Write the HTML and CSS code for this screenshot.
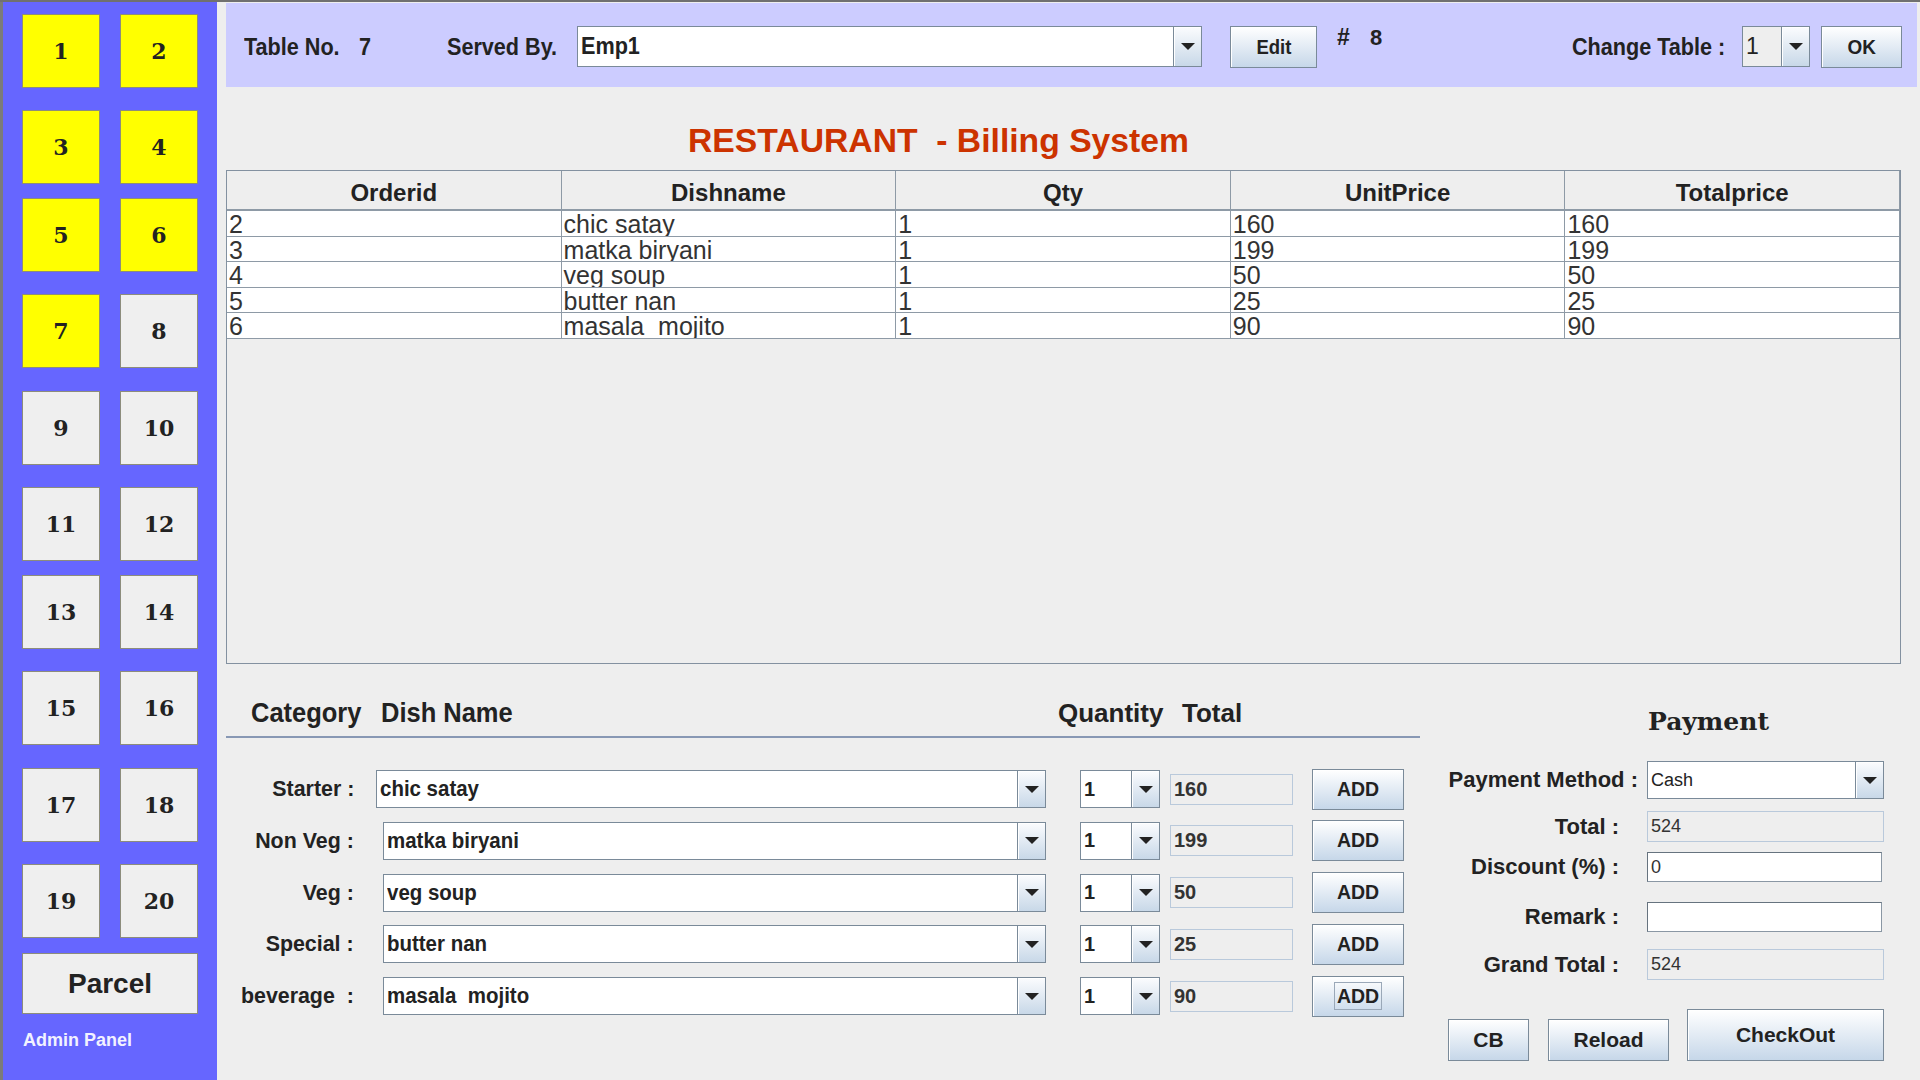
FILE: index.html
```html
<!DOCTYPE html>
<html lang="en">
<head>
<meta charset="utf-8">
<title>RESTAURANT - Billing System</title>
<link rel="stylesheet" href="styles.css">
</head>
<body>
<div class="app">
  <aside class="sidebar">
    <div class="trow"><button class="tbtn busy">1</button><button class="tbtn busy">2</button></div>
    <div class="trow g14"><button class="tbtn busy">3</button><button class="tbtn busy">4</button></div>
    <div class="trow"><button class="tbtn busy">5</button><button class="tbtn busy">6</button></div>
    <div class="trow g23"><button class="tbtn busy">7</button><button class="tbtn">8</button></div>
    <div class="trow"><button class="tbtn">9</button><button class="tbtn">10</button></div>
    <div class="trow g14"><button class="tbtn">11</button><button class="tbtn">12</button></div>
    <div class="trow"><button class="tbtn">13</button><button class="tbtn">14</button></div>
    <div class="trow g23"><button class="tbtn">15</button><button class="tbtn">16</button></div>
    <div class="trow"><button class="tbtn">17</button><button class="tbtn">18</button></div>
    <div class="trow g15"><button class="tbtn">19</button><button class="tbtn">20</button></div>
    <button class="parcel">Parcel</button>
    <div class="admin">Admin Panel</div>
  </aside>

  <main class="main">
    <header class="topbar">
      <span class="tlabel tno"><span class="sq">Table No.</span></span>
      <span class="tlabel tval"><span class="sq">7</span></span>
      <span class="tlabel served"><span class="sq">Served By.</span></span>
      <div class="combo served-combo"><span class="cval"><span class="sq">Emp1</span></span><span class="carrow"></span></div>
      <button class="btn edit"><span class="sq mid">Edit</span></button>
      <span class="ordno"><span class="hash">#</span>8</span>
      <div class="change">
        <span class="tlabel"><span class="sq right">Change Table :</span></span>
        <div class="combo table-combo"><span class="cval grayval">1</span><span class="carrow"></span></div>
        <button class="btn ok"><span class="sq mid">OK</span></button>
      </div>
    </header>

    <h1 class="title">RESTAURANT  - Billing System</h1>

    <div class="table-pane">
      <table class="orders">
        <thead>
          <tr><th>Orderid</th><th>Dishname</th><th>Qty</th><th>UnitPrice</th><th>Totalprice</th></tr>
        </thead>
        <tbody>
          <tr><td>2</td><td>chic satay</td><td>1</td><td>160</td><td>160</td></tr>
          <tr><td>3</td><td>matka biryani</td><td>1</td><td>199</td><td>199</td></tr>
          <tr><td>4</td><td>veg soup</td><td>1</td><td>50</td><td>50</td></tr>
          <tr><td>5</td><td>butter nan</td><td>1</td><td>25</td><td>25</td></tr>
          <tr><td>6</td><td>masala  mojito</td><td>1</td><td>90</td><td>90</td></tr>
        </tbody>
      </table>
    </div>

    <section class="lower">
      <div class="order">
        <div class="heads">
          <span class="h-cat"><span class="sq">Category</span></span>
          <span class="h-dish"><span class="sq">Dish Name</span></span>
          <span class="h-qty">Quantity</span>
          <span class="h-total">Total</span>
        </div>
        <div class="rule"></div>
        <div class="rows">
          <div class="drow">
            <span class="dlabel"><span class="sq right">Starter :</span></span>
            <div class="combo dish first"><span class="cval dishval"><span class="sq">chic satay</span></span><span class="carrow"></span></div>
            <div class="combo qty"><span class="cval qtyval">1</span><span class="carrow"></span></div>
            <div class="tfield">160</div>
            <button class="btn add">ADD</button>
          </div>
          <div class="drow">
            <span class="dlabel"><span class="sq right">Non Veg :</span></span>
            <div class="combo dish"><span class="cval dishval"><span class="sq">matka biryani</span></span><span class="carrow"></span></div>
            <div class="combo qty"><span class="cval qtyval">1</span><span class="carrow"></span></div>
            <div class="tfield">199</div>
            <button class="btn add">ADD</button>
          </div>
          <div class="drow">
            <span class="dlabel"><span class="sq right">Veg :</span></span>
            <div class="combo dish"><span class="cval dishval"><span class="sq">veg soup</span></span><span class="carrow"></span></div>
            <div class="combo qty"><span class="cval qtyval">1</span><span class="carrow"></span></div>
            <div class="tfield">50</div>
            <button class="btn add">ADD</button>
          </div>
          <div class="drow">
            <span class="dlabel"><span class="sq right">Special :</span></span>
            <div class="combo dish"><span class="cval dishval"><span class="sq">butter nan</span></span><span class="carrow"></span></div>
            <div class="combo qty"><span class="cval qtyval">1</span><span class="carrow"></span></div>
            <div class="tfield">25</div>
            <button class="btn add">ADD</button>
          </div>
          <div class="drow">
            <span class="dlabel"><span class="sq right">beverage&nbsp; :</span></span>
            <div class="combo dish"><span class="cval dishval"><span class="sq">masala&nbsp; mojito</span></span><span class="carrow"></span></div>
            <div class="combo qty"><span class="cval qtyval">1</span><span class="carrow"></span></div>
            <div class="tfield">90</div>
            <button class="btn add"><span class="focus">ADD</span></button>
          </div>
        </div>
      </div>

      <div class="payment">
        <div class="ptitle">Payment</div>
        <div class="prow method">
          <span class="plabel wide">Payment Method :</span>
          <div class="combo pay-combo"><span class="cval payval">Cash</span><span class="carrow"></span></div>
        </div>
        <div class="prow ptotal">
          <span class="plabel">Total :</span>
          <div class="pfield disabled">524</div>
        </div>
        <div class="prow pdisc">
          <span class="plabel">Discount (%) :</span>
          <div class="pfield input">0</div>
        </div>
        <div class="prow premark">
          <span class="plabel">Remark :</span>
          <div class="pfield input"></div>
        </div>
        <div class="prow pgrand">
          <span class="plabel">Grand Total :</span>
          <div class="pfield disabled">524</div>
        </div>
        <div class="pbuttons">
          <button class="btn cb">CB</button>
          <button class="btn reload">Reload</button>
          <button class="btn checkout">CheckOut</button>
        </div>
      </div>
    </section>
  </main>
</div>
</body>
</html>
```

FILE: styles.css
```css
* { box-sizing: border-box; }

html, body {
  margin: 0;
  padding: 0;
  width: 1920px;
  height: 1080px;
  overflow: hidden;
  background: #eeeeee;
}

.app {
  display: flex;
  width: 1920px;
  height: 1080px;
  border-top: 2px solid #707070;
  background: #eeeeee;
  font-family: "Liberation Sans", Arial, sans-serif;
  color: #222;
}

/* condensed text: the original UI uses a narrow face */
.sq {
  display: inline-block;
  white-space: pre;
  transform: scaleX(var(--sx, 0.9));
  transform-origin: left center;
}
.sq.right { transform-origin: right center; }
.sq.mid { transform-origin: center center; }

/* ---------- sidebar ---------- */
.sidebar {
  width: 217px;
  flex: none;
  background: #6666ff;
  border-left: 3px solid #7b7b7b;
  padding: 12px 0 0 19px;
  display: flex;
  flex-direction: column;
}

.trow {
  display: flex;
  gap: 20px;
  margin-bottom: 22px;
}
.trow.g14 { margin-bottom: 14px; }
.trow.g23 { margin-bottom: 23px; }
.trow.g15 { margin-bottom: 15px; }

.tbtn {
  width: 78px;
  height: 74px;
  margin: 0;
  padding: 0;
  border: 1px solid #8c8c7c;
  background: #efefef;
  font-family: "DejaVu Serif", "Liberation Serif", serif;
  font-weight: bold;
  font-size: 22px;
  color: #222;
}
.tbtn.busy { background: #ffff00; }

.parcel {
  width: 176px;
  height: 61px;
  margin: 0;
  padding: 0;
  border: 1px solid #8c8c7c;
  background: #efefef;
  font-family: "Liberation Sans", Arial, sans-serif;
  font-weight: bold;
  font-size: 28px;
  color: #222;
}

.admin {
  margin-top: 16px;
  margin-left: 1px;
  font-weight: bold;
  font-size: 18px;
  line-height: 20px;
  color: #f2f2ff;
}

/* ---------- main ---------- */
.main {
  flex: 1;
  padding-left: 9px;
  display: flex;
  flex-direction: column;
}

.topbar {
  margin-top: 1px;
  margin-right: 3px;
  height: 84px;
  padding: 3px 0 0 18px;
  background: #ccccff;
  display: flex;
  align-items: center;
}

.tlabel {
  font-weight: bold;
  font-size: 24px;
  color: #222;
  white-space: nowrap;
  --sx: 0.9;
}
.tno { width: 115px; }
.tval { width: 88px; }
.served { width: 130px; }

.combo {
  display: flex;
  border: 1px solid #7a8a99;
  background: #ffffff;
  flex: none;
}
.cval {
  flex: 1;
  display: flex;
  align-items: center;
  padding-left: 3px;
  overflow: hidden;
  white-space: pre;
  color: #222;
}
.carrow {
  width: 28px;
  flex: none;
  border-left: 1px solid #7a8a99;
  background: linear-gradient(#fbfcfe, #c8d8e8);
  box-shadow: inset 1px 1px 0 #ffffff;
  display: flex;
  align-items: center;
  justify-content: center;
}
.carrow::after {
  content: "";
  width: 0;
  height: 0;
  border-left: 7px solid transparent;
  border-right: 7px solid transparent;
  border-top: 7px solid #222;
}

.served-combo {
  width: 625px;
  height: 41px;
}
.served-combo .cval {
  font-weight: bold;
  font-size: 23px;
  --sx: 0.94;
}

.btn {
  margin: 0;
  padding: 0;
  border: 1px solid #7a8a99;
  background: linear-gradient(#ffffff, #c6d7e9);
  box-shadow: inset 1px 1px 0 #ffffff;
  font-family: "Liberation Sans", Arial, sans-serif;
  font-weight: bold;
  color: #222;
}

.edit {
  margin-left: 28px;
  width: 87px;
  height: 42px;
  font-size: 21px;
  --sx: 0.88;
}

.ordno {
  align-self: flex-start;
  margin-top: 19px;
  margin-left: 20px;
  font-weight: bold;
  font-size: 22px;
  line-height: 24px;
  color: #222;
  white-space: nowrap;
}
.hash {
  display: inline-block;
  width: 33px;
  font-size: 23px;
}

.change {
  margin-left: auto;
  margin-right: 15px;
  display: flex;
  align-items: center;
}
.table-combo {
  margin-left: 17px;
  width: 68px;
  height: 41px;
}
.grayval {
  background: #eeeeee;
  font-size: 23px;
}
.ok {
  margin-left: 11px;
  width: 81px;
  height: 42px;
  font-size: 21px;
  --sx: 0.9;
}

.title {
  margin: 33px 0 0 462px;
  height: 40px;
  font-family: "Liberation Sans", Arial, sans-serif;
  font-weight: bold;
  font-size: 33.7px;
  line-height: 40px;
  color: #cc3300;
  white-space: pre;
}

/* ---------- table ---------- */
.table-pane {
  margin-top: 10px;
  width: 1675px;
  height: 494px;
  border: 1px solid #8391a0;
  background: #eeeeee;
  flex: none;
}
.orders {
  width: 100%;
  border-collapse: separate;
  border-spacing: 0;
  table-layout: fixed;
}
.orders th {
  padding: 6px 0 0 0;
  line-height: 32px;
  background: #eeeeee;
  border-right: 1px solid #8e9aa6;
  border-bottom: 2px solid #8e9aa6;
  font-weight: bold;
  font-size: 24px;
  color: #222;
  text-align: center;
}
.orders td {
  padding: 3px 0 0 2px;
  line-height: 21.6px;
  height: 25.6px;
  background: #ffffff;
  border-right: 1px solid #8e9aa6;
  border-bottom: 1px solid #8e9aa6;
  font-size: 25px;
  color: #333;
  white-space: pre;
  overflow: hidden;
}

/* ---------- lower ---------- */
.lower {
  flex: 1;
  display: flex;
}

.order {
  width: 1194px;
  flex: none;
  padding-top: 33px;
}

.heads {
  display: flex;
  align-items: baseline;
  height: 32px;
  line-height: 32px;
  padding-left: 25px;
  color: #222;
  white-space: nowrap;
}
.h-cat, .h-dish {
  font-weight: bold;
  font-size: 28px;
  --sx: 0.91;
}
.h-cat { width: 130px; }
.h-dish { width: 677px; }
.h-qty, .h-total {
  font-weight: bold;
  font-size: 26px;
}
.h-qty { width: 124px; }

.rule {
  margin-top: 7px;
  height: 2px;
  background: #8898b4;
}

.rows {
  margin-top: 32px;
  display: grid;
  row-gap: 13.75px;
}
.drow {
  display: flex;
  align-items: center;
  height: 38px;
}
.dlabel {
  width: 128px;
  text-align: right;
  font-weight: bold;
  font-size: 22.5px;
  white-space: pre;
  color: #222;
  --sx: 0.95;
}
.combo.dish {
  margin-left: 29px;
  width: 663px;
  height: 38px;
}
.combo.dish.first {
  margin-left: 22px;
  width: 670px;
}
.dishval {
  font-weight: bold;
  font-size: 22px;
  --sx: 0.93;
}
.combo.qty {
  margin-left: 34px;
  width: 80px;
  height: 38px;
}
.qtyval {
  font-weight: bold;
  font-size: 20px;
}
.tfield {
  margin-left: 10px;
  width: 123px;
  height: 31px;
  border: 1px solid #b9c9db;
  background: #eeeeee;
  padding-left: 3px;
  display: flex;
  align-items: center;
  font-weight: bold;
  font-size: 20px;
  color: #333;
}
.btn.add {
  margin-left: 19px;
  width: 92px;
  height: 41px;
  font-size: 19.5px;
}
.focus {
  display: inline-block;
  padding: 0 2px;
  border: 1px solid #9aa8b8;
  line-height: 26px;
}

/* ---------- payment ---------- */
.payment {
  flex: 1;
  padding-top: 43px;
}
.ptitle {
  margin-left: 228px;
  font-family: "DejaVu Serif", "Liberation Serif", serif;
  font-weight: bold;
  font-size: 25px;
  line-height: 30px;
  color: #222;
}
.prow {
  display: flex;
  align-items: center;
}
.prow.method { margin-top: 24px; height: 38px; }
.prow.ptotal { margin-top: 12px; height: 31px; }
.prow.pdisc { margin-top: 10px; height: 30px; }
.prow.premark { margin-top: 20px; height: 30px; }
.prow.pgrand { margin-top: 17px; height: 31px; }

.plabel {
  width: 218px;
  flex: none;
  text-align: right;
  padding-right: 19px;
  font-weight: bold;
  font-size: 22px;
  white-space: nowrap;
  color: #222;
}
.plabel.wide { padding-right: 0; }

.pay-combo {
  margin-left: 9px;
  width: 237px;
  height: 38px;
}
.payval { font-size: 18px; }

.pfield {
  margin-left: 9px;
  height: 100%;
  display: flex;
  align-items: center;
  padding-left: 3px;
  font-size: 18px;
  color: #333;
}
.pfield.disabled {
  width: 237px;
  background: #eeeeee;
  border: 1px solid #b9c9db;
}
.pfield.input {
  width: 235px;
  background: #ffffff;
  border: 1px solid #8a97a4;
  border-top-color: #66737f;
  border-left-color: #66737f;
}

.pbuttons {
  margin-top: 29px;
  margin-left: 28px;
  display: flex;
  align-items: flex-end;
}
.btn.cb {
  width: 81px;
  height: 42px;
  font-size: 21px;
}
.btn.reload {
  margin-left: 19px;
  width: 121px;
  height: 42px;
  font-size: 21px;
}
.btn.checkout {
  margin-left: 18px;
  width: 197px;
  height: 52px;
  font-size: 21px;
}
```
